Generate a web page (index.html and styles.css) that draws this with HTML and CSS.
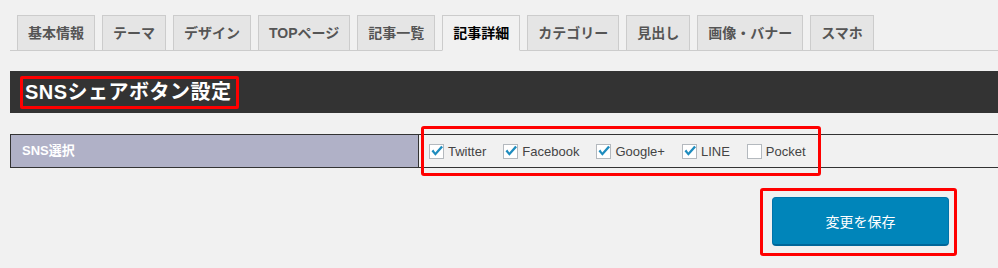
FILE: index.html
```html
<!DOCTYPE html>
<html lang="ja">
<head>
    <meta charset="UTF-8">
    <title>SNSシェアボタン設定</title>
    <link rel="stylesheet" href="styles.css">
</head>
<body>
    <div class="nav-tabs">
        <a class="nav-tab" href="#">基本情報</a>
        <a class="nav-tab" href="#">テーマ</a>
        <a class="nav-tab" href="#">デザイン</a>
        <a class="nav-tab" href="#">TOPページ</a>
        <a class="nav-tab" href="#">記事一覧</a>
        <a class="nav-tab active" href="#">記事詳細</a>
        <a class="nav-tab" href="#">カテゴリー</a>
        <a class="nav-tab" href="#">見出し</a>
        <a class="nav-tab" href="#">画像・バナー</a>
        <a class="nav-tab" href="#">スマホ</a>
    </div>

    <div class="section-title">
        <h2 class="marked">SNSシェアボタン設定</h2>
    </div>

    <div class="form-table">
        <div class="row">
            <div class="row-label">SNS選択</div>
            <div class="row-field">
                <label class="check"><span class="box"><svg viewBox="0 0 15 15" width="15" height="15"><path d="M2.5 7.2 L4.3 5.6 L6.3 8.4 L12.2 1.8 L14 3.2 L6.4 11.8 Z" fill="#1e8cbe"/></svg></span>Twitter</label>
                <label class="check"><span class="box"><svg viewBox="0 0 15 15" width="15" height="15"><path d="M2.5 7.2 L4.3 5.6 L6.3 8.4 L12.2 1.8 L14 3.2 L6.4 11.8 Z" fill="#1e8cbe"/></svg></span>Facebook</label>
                <label class="check"><span class="box"><svg viewBox="0 0 15 15" width="15" height="15"><path d="M2.5 7.2 L4.3 5.6 L6.3 8.4 L12.2 1.8 L14 3.2 L6.4 11.8 Z" fill="#1e8cbe"/></svg></span>Google+</label>
                <label class="check"><span class="box"><svg viewBox="0 0 15 15" width="15" height="15"><path d="M2.5 7.2 L4.3 5.6 L6.3 8.4 L12.2 1.8 L14 3.2 L6.4 11.8 Z" fill="#1e8cbe"/></svg></span>LINE</label>
                <label class="check"><span class="box"></span>Pocket</label>
            </div>
            <div class="marker"></div> <!-- red annotation box -->
        </div>
    </div>

    <div class="submit-row">
        <div class="marked-btn">
            <button class="button-primary">変更を保存</button>
        </div>
    </div>
</body>
</html>
```

FILE: styles.css
```css
/* General */
body {
    margin: 0;
    padding: 15px 0 0 10px;
    background: #f1f1f1;
    font-family: "Liberation Sans", "Noto Sans CJK JP", sans-serif;
    color: #444;
}

/* Tabs */
.nav-tabs {
    display: flex;
    gap: 7px;
    padding-left: 7px;
    border-bottom: 1px solid #ccc;
}

.nav-tab {
    display: block;
    margin-bottom: -1px;
    padding: 5px 10px;
    line-height: 24px;
    font-size: 14px;
    font-weight: bold;
    color: #555;
    text-decoration: none;
    background: #e5e5e5;
    border: 1px solid #ccc;
}

.nav-tab.active {
    color: #000;
    background: #f1f1f1;
    border-bottom-color: #f1f1f1;
}

/* Section heading */
.section-title {
    margin-top: 20px;
    height: 42px;
    padding: 5px 0 0 10px;
    box-sizing: border-box;
    background: #333;
}

.marked {
    display: inline-block;
    margin: 0;
    padding: 0 4px 0 2px;
    font-size: 20px;
    line-height: 27px;
    font-weight: bold;
    letter-spacing: 0.5px;
    color: #fff;
    border: 3px solid #f00;
    border-radius: 2px;
}

/* Form table */
.form-table {
    margin-top: 21px;
}

.row {
    position: relative;
    display: flex;
    height: 32px;
    border-top: 1px solid #333;
    border-bottom: 1px solid #333;
}

.row-label {
    width: 396px;
    padding-left: 11px;
    background: #b0b1c7;
    border-left: 1px solid #333;
    border-right: 1px solid #333;
    color: #fff;
    font-size: 13px;
    font-weight: bold;
    line-height: 32px;
}

.row-field {
    display: flex;
    align-items: center;
    gap: 17px;
    padding-left: 10px;
}

.check {
    display: flex;
    align-items: center;
    gap: 4px;
    font-size: 13px;
    color: #444;
}

.box {
    display: block;
    width: 15px;
    height: 15px;
    background: #fff;
    border: 1px solid #b4b9be;
    box-sizing: border-box;
    position: relative;
}

.box svg {
    position: absolute;
    left: -1px;
    top: -1px;
}

.marker {
    position: absolute;
    left: 411px;
    top: -9px;
    width: 400px;
    height: 50px;
    box-sizing: border-box;
    border: 3px solid #f00;
    border-radius: 3px;
}

/* Save button */
.submit-row {
    display: flex;
    justify-content: flex-end;
    padding-right: 41px;
    margin-top: 20px;
}

.marked-btn {
    padding: 6px 5px 7px 9px;
    border: 3px solid #f00;
    border-radius: 3px;
}

.button-primary {
    display: block;
    width: 177px;
    height: 49px;
    background: #0085ba;
    border: 1px solid #0073aa;
    border-bottom: 2px solid #006799;
    border-radius: 4px;
    color: #fff;
    font-family: "Liberation Sans", "Noto Sans CJK JP", sans-serif;
    font-size: 14px;
}
```
